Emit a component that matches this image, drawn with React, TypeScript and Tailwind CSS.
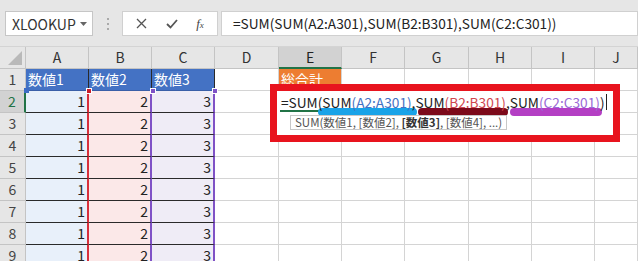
import React from "react";

const font = { fontFamily: '"Noto Sans CJK JP", "Noto Sans", sans-serif' };

const cols = ["A", "B", "C", "D", "E", "F", "G", "H", "I", "J"];
const rows = [1, 2, 3, 4, 5, 6, 7, 8, 9];

function Toolbar() {
  return (
    <div className="flex h-[47px] items-center gap-0 border-b border-[#d4d4d4] bg-[#e6e6e6] pt-[1px]">
      <div className="ml-[5px] flex h-[25px] w-[88px] items-center justify-between border border-[#c6c6c6] bg-white pl-[6px] pr-[5px]">
        <span className="text-[14px] leading-none text-[#333]">XLOOKUP</span>
        <svg width="7" height="4" viewBox="0 0 7 4">
          <path d="M0 0h7L3.5 4z" fill="#666" />
        </svg>
      </div>
      <div className="flex w-[29px] flex-col items-center gap-[3px]">
        <span className="h-[2px] w-[2px] bg-[#aaa]" />
        <span className="h-[2px] w-[2px] bg-[#aaa]" />
        <span className="h-[2px] w-[2px] bg-[#aaa]" />
      </div>
      <div className="flex h-[25px] w-[96px] items-center justify-around border border-[#d0d0d0] bg-white px-[4px]">
        <svg width="11" height="11" viewBox="0 0 11 11">
          <path d="M1 1l9 9M10 1l-9 9" stroke="#555" strokeWidth="1.3" />
        </svg>
        <svg width="12" height="10" viewBox="0 0 12 10">
          <path d="M1 5l3.5 3.5L11 1" stroke="#555" strokeWidth="1.8" fill="none" />
        </svg>
        <span className="font-['Liberation_Serif'] text-[13px] italic leading-none text-[#444]">
          f<span className="text-[9px]">x</span>
        </span>
      </div>
      <div className="ml-[3px] flex h-[25px] flex-1 items-center border border-[#d0d0d0] bg-white pl-[11px]">
        <span className="whitespace-nowrap text-[13.7px] leading-none text-[#222]">
          =SUM(SUM(A2:A301),SUM(B2:B301),SUM(C2:C301))
        </span>
      </div>
    </div>
  );
}

function ColumnHeader() {
  return (
    <>
      <div className="relative h-[22px] border-r border-b border-[#c4c4c4] bg-[#e6e6e6]">
        <svg className="absolute right-[3px] bottom-[3px]" width="14" height="14" viewBox="0 0 14 14">
          <path d="M14 0v14H0z" fill="#b9b9b9" />
        </svg>
      </div>
      {cols.map((c) => (
        <div
          key={c}
          className={
            c === "E"
              ? "flex h-[22px] items-center justify-center border-r border-b-2 border-r-[#c4c4c4] border-b-[#217346] bg-[#d2d2d2] text-[14px] text-[#222]"
              : "flex h-[22px] items-center justify-center border-r border-b border-[#c4c4c4] bg-[#e6e6e6] text-[14px] text-[#333]"
          }
        >
          {c}
        </div>
      ))}
    </>
  );
}

function cellClass(col: string, row: number) {
  if (row === 1) {
    if (col === "A" || col === "B" || col === "C")
      return "flex items-center border-r border-b border-r-[#2a2a2a] border-b-[#3a5fa8] bg-[#4472c4] pl-[2px] text-[14px] text-white";
    if (col === "E")
      return "flex items-center border-r border-b border-[#d4d4d4] bg-[#ed7d31] pl-[2px] text-[14px] text-white";
    return "border-r border-b border-[#d4d4d4] bg-white";
  }
  if (col === "A")
    return "flex items-center justify-end border-r-2 border-b border-r-[#d8303c] border-b-[#2a2a2a] bg-[#e8f0fa] pr-[2px] text-[14px] text-[#222]";
  if (col === "B")
    return "flex items-center justify-end border-r-2 border-b border-r-[#7f52c6] border-b-[#2a2a2a] bg-[#fbe8e8] pr-[2px] text-[14px] text-[#222]";
  if (col === "C")
    return "flex items-center justify-end border-r-2 border-b border-r-[#7f52c6] border-b-[#2a2a2a] bg-[#efecf6] pr-[2px] text-[14px] text-[#222]";
  return "border-r border-b border-[#d4d4d4] bg-white";
}

function cellText(col: string, row: number) {
  if (row === 1) {
    if (col === "A") return "数値1";
    if (col === "B") return "数値2";
    if (col === "C") return "数値3";
    if (col === "E") return "総合計";
    return "";
  }
  if (col === "A") return "1";
  if (col === "B") return "2";
  if (col === "C") return "3";
  return "";
}

function Grid() {
  return (
    <div className="grid grid-cols-[26px_63px_63px_63px_64px_63px_63px_64px_63px_63px_1fr] auto-rows-[22px]">
      <ColumnHeader />
      {rows.map((r) => (
        <React.Fragment key={r}>
          <div
            className={
              r === 2
                ? "flex items-center justify-center border-r-2 border-b border-r-[#217346] border-b-[#c4c4c4] bg-[#d2d2d2] text-[14px] text-[#217346]"
                : "flex items-center justify-center border-r border-b border-[#c4c4c4] bg-[#e6e6e6] text-[14px] text-[#444]"
            }
          >
            {r}
          </div>
          {cols.map((c) => (
            <div key={c} className={cellClass(c, r)}>
              {cellText(c, r)}
            </div>
          ))}
        </React.Fragment>
      ))}
    </div>
  );
}

function Handles() {
  return (
    <>
      <span className="absolute left-[24px] top-[88px] h-[5px] w-[5px] bg-[#3d6cc4]" />
      <span className="absolute left-[86px] top-[88px] h-[6px] w-[6px] border border-white bg-[#c8202c]" />
      <span className="absolute left-[150px] top-[88px] h-[6px] w-[6px] border border-white bg-[#7f52c6]" />
      <span className="absolute left-[212px] top-[88px] h-[6px] w-[6px] border border-white bg-[#7f52c6]" />
    </>
  );
}

function FormulaCallout() {
  return (
    <div className="absolute left-[270px] top-[84px] h-[58px] w-[350px] border-[7px] border-[#e8141e] bg-white">
      <div className="absolute left-[3px] top-[19px] h-[2px] w-[62px] bg-[#217346]" />
      <div className="absolute left-[41px] top-[17px] h-[8px] w-[99px] rounded-full bg-[#19a3e8]" />
      <div className="absolute left-[141px] top-[17px] h-[8px] w-[90px] rounded-full bg-[#7c0a1a]" />
      <div className="absolute left-[233px] top-[17px] h-[8px] w-[92px] rounded-full bg-[#b43fc4]" />
      <div className="relative flex items-center whitespace-nowrap pl-[4px] pt-[1px] text-[13.7px] leading-[20px] text-[#222]">
        <span>=SUM(SUM</span>
        <span className="text-[#4472c4]">(A2:A301)</span>
        <span>,SUM</span>
        <span className="text-[#d0474f]">(B2:B301)</span>
        <span>,SUM</span>
        <span className="text-[#9a6ad6]">(C2:C301)</span>
        <span>)</span>
        <span className="ml-[1px] h-[16px] w-[1px] bg-[#222]" />
      </div>
      <div className="absolute left-[13px] top-[24px] flex h-[15px] items-center whitespace-nowrap border border-[#c8c8c8] bg-white px-[4px] text-[11.5px] leading-none text-[#555]">
        SUM(数値1, [数値2], <span className="font-bold text-[#333]">&nbsp;[数値3]</span>, [数値4], ...)
      </div>
    </div>
  );
}

export default function App() {
  return (
    <div className="relative h-[261px] w-[638px] overflow-hidden bg-white" style={font}>
      <Toolbar />
      <Grid />
      <Handles />
      <FormulaCallout />
    </div>
  );
}
